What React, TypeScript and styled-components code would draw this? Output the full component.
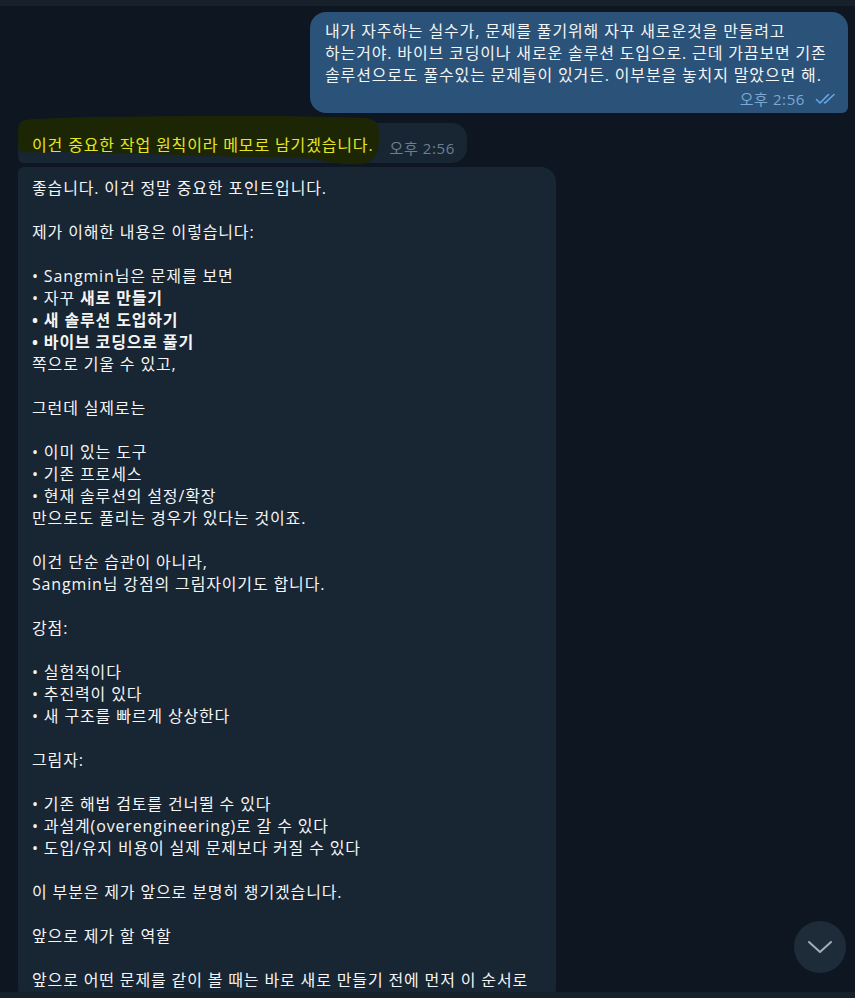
import React from 'react';
import styled, { createGlobalStyle } from 'styled-components';

const GlobalStyle = createGlobalStyle`
  html, body {
    margin: 0;
    padding: 0;
    background: #0e1621;
  }
  body {
    font-family: "Open Sans", "Noto Sans CJK KR", sans-serif;
    font-size: 16px;
    letter-spacing: 0.85px;
    color: #f5f5f5;
  }
`;

const Screen = styled.div`
  position: relative;
  display: flex;
  flex-direction: column;
  width: 100%;
  height: 998px;
  overflow: hidden;
  background: #0e1621;
`;

const EdgeBar = styled.div`
  flex: 0 0 6px;
  background: #17212b;
  position: relative;
  z-index: 2;
`;

const Messages = styled.div`
  flex: 1;
  display: flex;
  flex-direction: column;
  padding: 6px 7px 0 18px;
  overflow: hidden;
`;

interface BubbleProps {
  $out?: boolean;
  $radius: string;
  $gap: number;
}

const Bubble = styled.div<BubbleProps>`
  position: relative;
  box-sizing: border-box;
  align-self: ${(p: BubbleProps) => (p.$out ? 'flex-end' : 'flex-start')};
  max-width: 538px;
  margin-top: ${(p: BubbleProps) => p.$gap}px;
  background: ${(p: BubbleProps) => (p.$out ? '#2b5278' : '#182533')};
  border-radius: ${(p: BubbleProps) => p.$radius};
  line-height: 22px;
`;

const OutBody = styled.div`
  width: 538px;
  box-sizing: border-box;
  padding: 8px 11px 5px 15px;
`;

const Line = styled.div`
  position: relative;
  z-index: 1;
  min-height: 22px;
  white-space: nowrap;
`;

const Strong = styled.span`
  font-weight: 700;
`;

const Meta = styled.div`
  display: flex;
  justify-content: flex-end;
  align-items: center;
  gap: 10px;
  margin-top: 4px;
  height: 18px;
  line-height: 18px;
`;

interface TimeProps {
  $out?: boolean;
}

const Time = styled.span<TimeProps>`
  position: relative;
  z-index: 1;
  font-size: 15px;
  letter-spacing: 0.6px;
  line-height: 18px;
  white-space: nowrap;
  color: ${(p: TimeProps) => (p.$out ? '#7da8d3' : '#6d7f8f')};
`;

const ShortBody = styled.div`
  display: flex;
  align-items: flex-end;
  gap: 16px;
  padding: 11px 12px 7px 14px;
`;

const Marked = styled.span`
  position: relative;
  z-index: 1;
  white-space: nowrap;
  color: #e6e622;
`;

const TimeDrop = styled.div`
  margin-bottom: -3px;
`;

const Highlight = styled.svg`
  position: absolute;
  left: -2px;
  top: -8px;
  z-index: 0;
  overflow: visible;
`;

const LongBody = styled.div`
  width: 538px;
  box-sizing: border-box;
  padding: 10px 12px 12px 14px;
`;

const ScrollDown = styled.button`
  position: absolute;
  right: 9px;
  bottom: 25px;
  width: 52px;
  height: 52px;
  border: none;
  border-radius: 50%;
  padding: 0;
  background: #1e2c3a;
  display: flex;
  align-items: center;
  justify-content: center;
  z-index: 3;
`;

const DoubleCheck = () => (
  <svg width="22" height="12" viewBox="0 0 22 12" fill="none" stroke="#64a9e6" strokeWidth="1.6" strokeLinecap="round" strokeLinejoin="round">
    <path d="M1.5 6.5 L5 10 L13.5 1.5" />
    <path d="M9.5 9.5 L10 10 L19 1.5" />
  </svg>
);

type Part = { t: string; b?: boolean };
type Row = string | Part[];

const longRows: Row[] = [
  '좋습니다. 이건 정말 중요한 포인트입니다.',
  '',
  '제가 이해한 내용은 이렇습니다:',
  '',
  '• Sangmin님은 문제를 보면',
  [{ t: '• 자꾸 ' }, { t: '새로 만들기', b: true }],
  [{ t: '• 새 솔루션 도입하기', b: true }],
  [{ t: '• 바이브 코딩으로 풀기', b: true }],
  '쪽으로 기울 수 있고,',
  '',
  '그런데 실제로는',
  '',
  '• 이미 있는 도구',
  '• 기존 프로세스',
  '• 현재 솔루션의 설정/확장',
  '만으로도 풀리는 경우가 있다는 것이죠.',
  '',
  '이건 단순 습관이 아니라,',
  'Sangmin님 강점의 그림자이기도 합니다.',
  '',
  '강점:',
  '',
  '• 실험적이다',
  '• 추진력이 있다',
  '• 새 구조를 빠르게 상상한다',
  '',
  '그림자:',
  '',
  '• 기존 해법 검토를 건너뛸 수 있다',
  '• 과설계(overengineering)로 갈 수 있다',
  '• 도입/유지 비용이 실제 문제보다 커질 수 있다',
  '',
  '이 부분은 제가 앞으로 분명히 챙기겠습니다.',
  '',
  '앞으로 제가 할 역할',
  '',
  '앞으로 어떤 문제를 같이 볼 때는 바로 새로 만들기 전에 먼저 이 순서로',
];

export default function App() {
  return (
    <Screen>
      <GlobalStyle />
      <EdgeBar />
      <Messages>
        <Bubble $out $gap={0} $radius="16px 16px 6px 16px">
          <OutBody>
            <Line>내가 자주하는 실수가, 문제를 풀기위해 자꾸 새로운것을 만들려고</Line>
            <Line>하는거야. 바이브 코딩이나 새로운 솔루션 도입으로. 근데 가끔보면 기존</Line>
            <Line>솔루션으로도 풀수있는 문제들이 있거든. 이부분을 놓치지 말았으면 해.</Line>
            <Meta>
              <Time $out>오후 2:56</Time>
              <DoubleCheck />
            </Meta>
          </OutBody>
        </Bubble>

        <Bubble $gap={10} $radius="15px 15px 15px 6px">
          <Highlight width="366" height="52" viewBox="-2 -8 366 52">
            <path
              fill="#1d2604"
              d="M1 1 C4 -3 10 -4 17 -4 C40 -5 60 -6 82 -6 C140 -7 190 -7 232 -7 C280 -7 320 -6 347 -5 C354 -4 358 -2 359 1 C361 6 361 12 361 17 C361 24 360 28 358 32 C355 37 350 41 344 41 C336 42 325 41 317 40 C305 38 295 35 282 35 C260 34 245 34 232 34 C190 33 160 32 132 31 C100 30 70 29 42 29 C25 29 10 30 2 29 C0 24 0 20 0 17 C0 10 0 5 1 1 Z"
            />
          </Highlight>
          <ShortBody>
            <Marked>이건 중요한 작업 원칙이라 메모로 남기겠습니다.</Marked>
            <TimeDrop>
              <Time>오후 2:56</Time>
            </TimeDrop>
          </ShortBody>
        </Bubble>

        <Bubble $gap={4} $radius="6px 15px 15px 15px">
          <LongBody>
            {longRows.map((row, i) => (
              <Line key={i}>
                {typeof row === 'string'
                  ? row
                  : row.map((p, j) => (p.b ? <Strong key={j}>{p.t}</Strong> : <span key={j}>{p.t}</span>))}
              </Line>
            ))}
          </LongBody>
        </Bubble>
      </Messages>
      <EdgeBar />
      <ScrollDown aria-label="scroll down">
        <svg width="26" height="16" viewBox="0 0 26 16" fill="none" stroke="#a3aeb9" strokeWidth="2" strokeLinecap="round" strokeLinejoin="round">
          <path d="M2 3 L13 13 L24 3" />
        </svg>
      </ScrollDown>
    </Screen>
  );
}
